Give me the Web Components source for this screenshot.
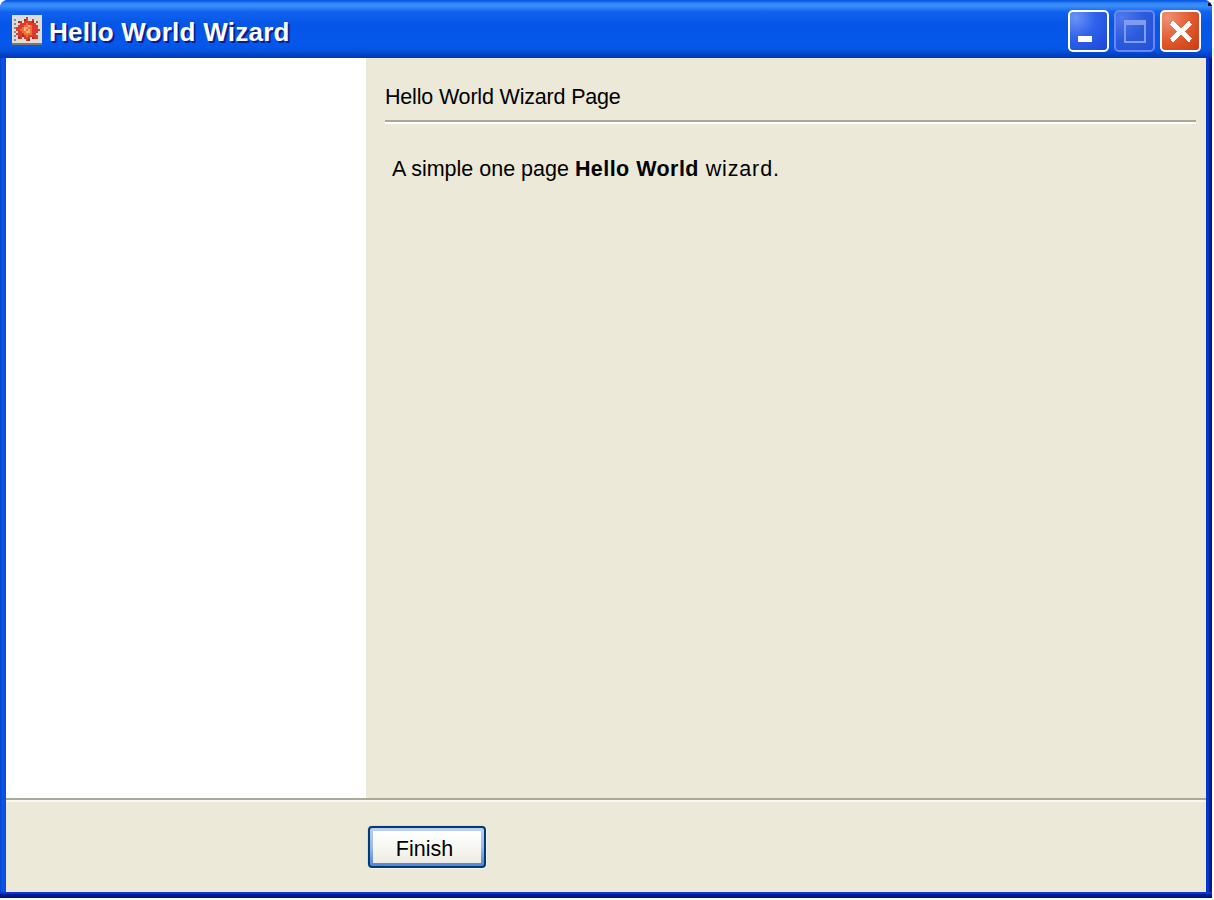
<!DOCTYPE html>
<html>
<head>
<meta charset="utf-8">
<title>Hello World Wizard</title>
<style>
    html, body { margin: 0; padding: 0; background: #fff; }
    body { font-family: "Liberation Sans", Arial, sans-serif; }
    b.strong { letter-spacing: 0.45px; }
    span.tail { letter-spacing: 0.85px; }
</style>
</head>
<body>
<xp-window>
    <xp-titlebar title-text="Hello World Wizard"></xp-titlebar>
    <wizard-body>
        <wizard-page heading="Hello World Wizard Page">
            A simple one page <b class="strong">Hello World</b><span class="tail"> wizard.</span>
        </wizard-page>
    </wizard-body>
    <wizard-footer>
        <wizard-button>Finish</wizard-button>
    </wizard-footer>
</xp-window>

<script>
class XpWindow extends HTMLElement {
    constructor() {
        super();
        this.attachShadow({ mode: 'open' });
    }

    connectedCallback() {
        this.shadowRoot.innerHTML = `
            <style>
                :host {
                    display: flex;
                    flex-direction: column;
                    position: relative;
                    width: 1212px;
                    height: 898px;
                    box-sizing: border-box;
                    background: #0831d9;
                    border-radius: 8px 8px 0 0;
                    overflow: hidden;
                }
                .frame {
                    flex: 1;
                    display: flex;
                    flex-direction: column;
                    min-height: 0;
                    margin: 0 6px 6px 6px;
                    background: #ece9d8;
                }
                .edge-l, .edge-r, .edge-b, .notch { position: absolute; }
                .edge-l { left: 0; top: 58px; width: 6px; height: 840px;
                    background: linear-gradient(to right, #0a3fd0, #0855dd 33%, #0855ea 66%, #0a45dc); }
                .edge-r { left: 1206px; top: 58px; width: 6px; height: 840px;
                    background: linear-gradient(to right, #0a35c8 0, #0a35c8 50%, #0620a0 50%, #001a8a 100%); }
                .edge-b { left: 0; top: 892px; width: 1212px; height: 6px;
                    background: linear-gradient(to bottom, #0a35d0 0, #0a35d0 34%, #001f9c 34%, #00137f 100%); }
                .notch { left: 1208px; top: 3px; width: 4px; height: 3px; background: #000; }
            </style>
            <slot name="title"></slot>
            <div class="edge-l"></div>
            <div class="edge-r"></div>
            <div class="edge-b"></div>
            <div class="notch"></div>
            <div class="frame"><slot></slot></div>
        `;
        const bar = this.querySelector('xp-titlebar');
        if (bar) bar.slot = 'title';
    }
}

// low-res app icon, each cell is 2px
const ICON_ROWS = [
    '...............',
    '.......r.......',
    '.g....dr..r....',
    '...dr.rrrrd.r..',
    '.g..rrrorrrr...',
    '...rrrooyorrr..',
    '.grrroyyoorrr..',
    '..rrooyoyorrrr.',
    '.g.rrooyyorrr..',
    '..rrrroooorr...',
    '.g.rrdrorrrrr..',
    '...dr.rrr.drr..',
    '.g.....rd......',
    '...............',
    'sssssssssssssss'
];
const ICON_COLORS = {
    '.': '#dedcd6', r: '#dc3a2c', d: '#a8281e', o: '#f0703c',
    y: '#f4b070', g: '#8a8a88', s: '#7a7872'
};

const iconSvg = () => {
    let cells = '';
    ICON_ROWS.forEach((row, y) => {
        [...row].forEach((c, x) => {
            cells += `<rect x="${x * 2}" y="${y * 2}" width="2" height="2" fill="${ICON_COLORS[c]}"/>`;
        });
    });
    return `<svg viewBox="0 0 30 30" shape-rendering="crispEdges">${cells}</svg>`;
};

class XpTitlebar extends HTMLElement {
    constructor() {
        super();
        this.attachShadow({ mode: 'open' });
    }

    connectedCallback() {
        const text = this.getAttribute('title-text');
        this.shadowRoot.innerHTML = `
            <style>
                :host {
                    display: flex;
                    align-items: center;
                    height: 58px;
                    flex: none;
                    box-sizing: border-box;
                    padding: 4px 11px 0 12px;
                    background: linear-gradient(to bottom,
                        #0a5ae0 0, #0a5ae0 1px, #2f86f5 3px, #3c8df8 6px, #0f62ee 12px,
                        #0655e6 24px, #0558ec 44px, #0655e0 50px, #0344c8 54px, #0238b8 58px);
                }
                svg { width: 30px; height: 30px; flex: none; margin-bottom: 3px; }
                .text {
                    margin: 2px 0 0 7px;
                    flex: 1;
                    font-family: "Liberation Sans", Arial, sans-serif;
                    font-weight: 700;
                    font-size: 26px;
                    letter-spacing: 0.25px;
                    color: #fff;
                    text-shadow: 2px 2px 0 #0a1f8c;
                    white-space: nowrap;
                }
                .buttons { display: flex; gap: 5px; }
            </style>
            ${iconSvg()}
            <span class="text">${text}</span>
            <div class="buttons">
                <caption-button kind="min"></caption-button>
                <caption-button kind="max"></caption-button>
                <caption-button kind="close"></caption-button>
            </div>
        `;
    }
}

class CaptionButton extends HTMLElement {
    constructor() {
        super();
        this.attachShadow({ mode: 'open' });
    }

    connectedCallback() {
        const kind = this.getAttribute('kind');
        const glyphs = {
            min: '<rect x="8" y="24" width="14" height="6" fill="#fff"/>',
            max: '<path d="M9 9h20v21H9z" fill="none" stroke="#7f9cf0" stroke-width="2"/><rect x="8" y="8" width="22" height="5" fill="#7f9cf0"/>',
            close: '<path d="M9.5 10.5l19 18M28.5 10.5l-19 18" stroke="#fff" stroke-width="5" fill="none"/>'
        };
        this.shadowRoot.innerHTML = `
            <style>
                :host {
                    display: block;
                    width: 41px;
                    height: 42px;
                    box-sizing: border-box;
                    border-radius: 5px;
                    border: 2px solid #fff;
                    background: radial-gradient(circle at 15% 15%, #6d93f5 0, #2f62ea 45%, #1a45d8 100%);
                }
                :host([kind="max"]) {
                    border-color: #6a88ea;
                    background: radial-gradient(circle at 15% 15%, #4f78ee 0, #2c5bdd 50%, #2350d6 100%);
                }
                :host([kind="close"]) {
                    background: radial-gradient(circle at 15% 15%, #f09078 0, #e25a30 50%, #c83c10 100%);
                }
                svg { display: block; width: 37px; height: 38px; }
            </style>
            <svg viewBox="0 0 37 38" shape-rendering="crispEdges">${glyphs[kind]}</svg>
        `;
    }
}

class WizardBody extends HTMLElement {
    constructor() {
        super();
        this.attachShadow({ mode: 'open' });
    }

    connectedCallback() {
        this.shadowRoot.innerHTML = `
            <style>
                :host {
                    flex: 1;
                    display: flex;
                    min-height: 0;
                }
                .side { width: 360px; flex: none; background: #fff; }
                .main { flex: 1; min-width: 0; }
            </style>
            <div class="side"></div>
            <div class="main"><slot></slot></div>
        `;
    }
}

class WizardPage extends HTMLElement {
    constructor() {
        super();
        this.attachShadow({ mode: 'open' });
    }

    connectedCallback() {
        const heading = this.getAttribute('heading');
        this.shadowRoot.innerHTML = `
            <style>
                :host {
                    display: block;
                    padding: 27px 10px 0 19px;
                    font-family: "Liberation Sans", Arial, sans-serif;
                    font-size: 21.5px;
                    color: #000;
                }
                .heading {
                    height: 25px;
                    line-height: 25px;
                    padding-bottom: 10px;
                    border-bottom: 2px solid #aca899;
                    box-shadow: 0 2px 0 #fff;
                    letter-spacing: -0.18px;
                }
                .text {
                    margin: 35px 0 0 7px;
                    line-height: 25px;
                }
            </style>
            <div class="heading">${heading}</div>
            <div class="text"><slot></slot></div>
        `;
    }
}

class WizardFooter extends HTMLElement {
    constructor() {
        super();
        this.attachShadow({ mode: 'open' });
    }

    connectedCallback() {
        this.shadowRoot.innerHTML = `
            <style>
                :host {
                    display: flex;
                    height: 94px;
                    flex: none;
                    box-sizing: border-box;
                    padding: 26px 0 0 362px;
                    border-top: 2px solid #aca899;
                    box-shadow: inset 0 2px 0 #f8f7f0;
                }
            </style>
            <slot></slot>
        `;
    }
}

class WizardButton extends HTMLElement {
    constructor() {
        super();
        this.attachShadow({ mode: 'open' });
    }

    connectedCallback() {
        this.shadowRoot.innerHTML = `
            <style>
                :host {
                    display: block;
                }
                button {
                    display: flex;
                    width: 118px;
                    height: 42px;
                    padding: 3px;
                    box-sizing: border-box;
                    border: 2px solid #003c74;
                    border-radius: 4px;
                    background: linear-gradient(to bottom, #bcd0f2 0, #9ab8e8 50%, #5484d8 100%);
                    box-shadow: 1px 1px 0 #f6f4ea, -1px -1px 0 #e0dcc8;
                    font-family: "Liberation Sans", Arial, sans-serif;
                    font-size: 21.5px;
                    color: #000;
                }
                .face {
                    display: block;
                    flex: 1;
                    padding: 5px 5px 0 0;
                    box-sizing: border-box;
                    line-height: 27px;
                    background: linear-gradient(to bottom, #fff 0, #f6f5f0 60%, #eceae0 100%);
                }
            </style>
            <button type="button"><span class="face"><slot></slot></span></button>
        `;
    }
}

customElements.define('xp-window', XpWindow);
customElements.define('xp-titlebar', XpTitlebar);
customElements.define('caption-button', CaptionButton);
customElements.define('wizard-body', WizardBody);
customElements.define('wizard-page', WizardPage);
customElements.define('wizard-footer', WizardFooter);
customElements.define('wizard-button', WizardButton);
</script>
</body>
</html>
